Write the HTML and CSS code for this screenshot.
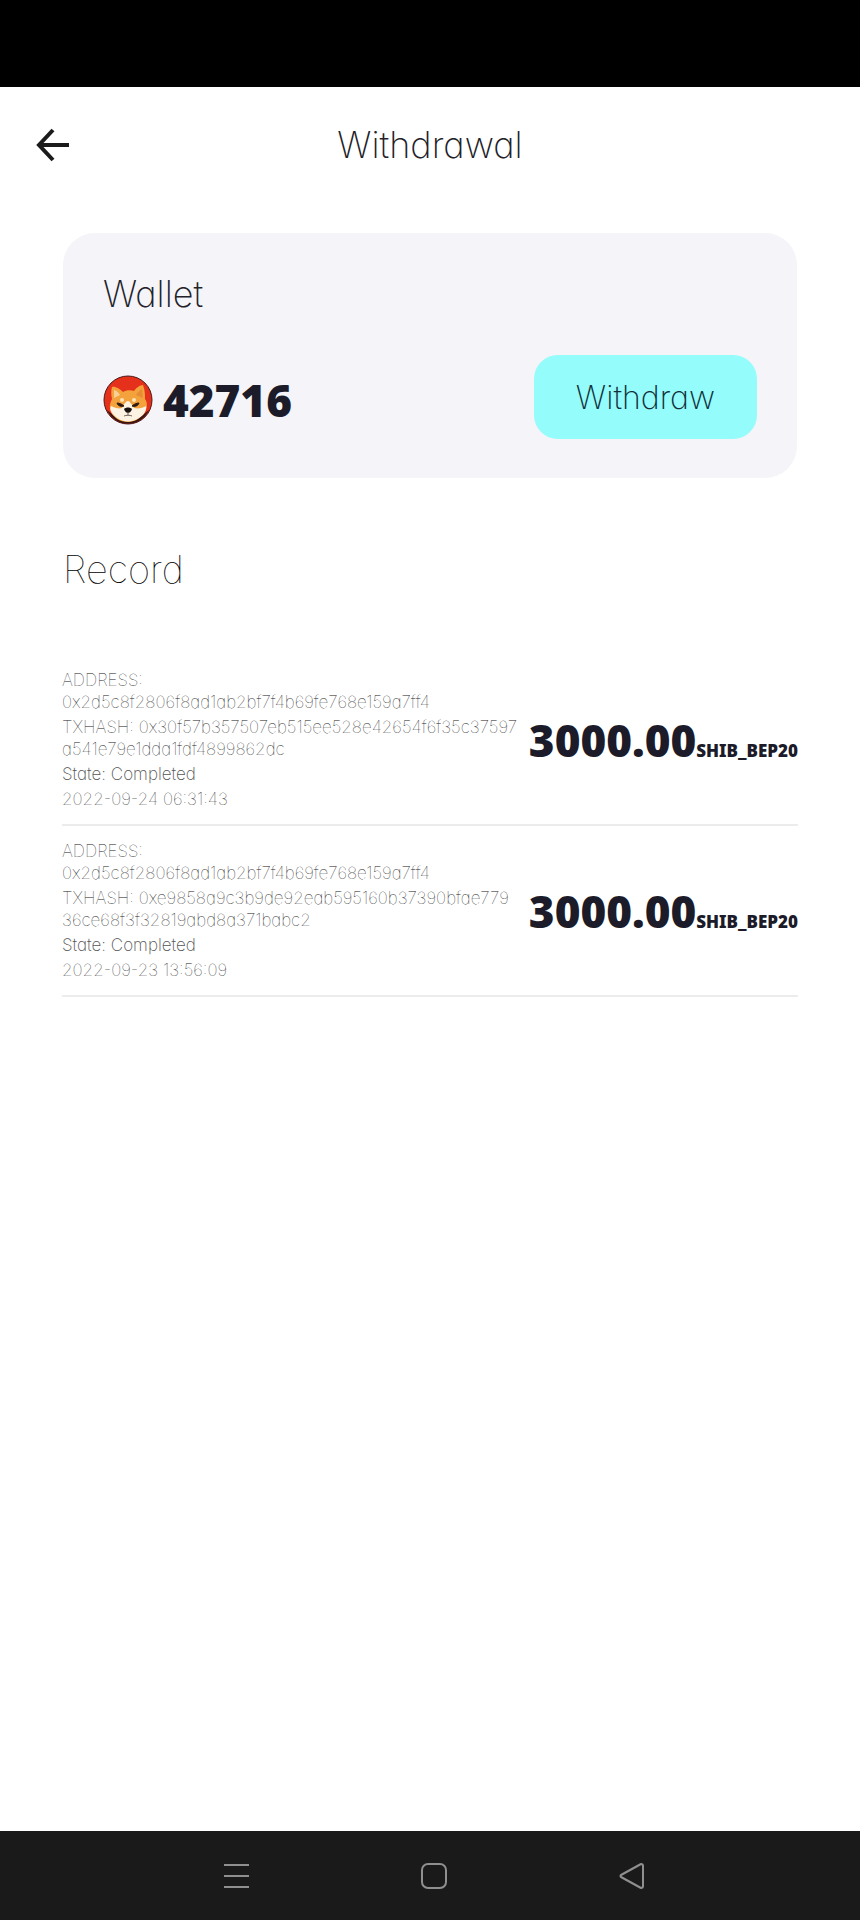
FILE: index.html
```html
<!DOCTYPE html>
<html lang="en">

<head>
    <meta charset="UTF-8">
    <meta name="viewport" content="width=device-width, initial-scale=1.0">
    <title>Withdrawal</title>
    <link rel="stylesheet" href="styles.css">
</head>

<body>
    <div class="status-bar"></div>

    <header class="header">
        <button class="back-btn" type="button" aria-label="Back">
            <svg width="34" height="34" viewBox="0 0 34 34" fill="none" stroke="#1b1b1b" stroke-width="4">
                <path d="M17 2 L3 17 L17 32 M3 17 H33" />
            </svg>
        </button>
        <h1 class="title">Withdrawal</h1>
    </header>

    <main class="main">
        <section class="wallet">
            <h2 class="wallet-title">Wallet</h2>
            <div class="wallet-row">
                <div class="balance">
                    <!-- shiba coin -->
                    <svg class="coin" width="50" height="50" viewBox="0 0 50 50">
                        <circle cx="25" cy="25" r="24" fill="#e5311b" stroke="#4a1a14" stroke-width="1" />
                        <path d="M4 35 A23 23 0 0 0 46 35 L40 40 L25 47 L10 40 Z" fill="#3a1411" />
                        <path d="M9 12 C12 11 17 14 20 17 C23 15 28 15 31 16 C33 13 37 10 40 10 C42 15 42 20 42 24 C45 28 44 33 42 37 C38 43 32 47 25 47 C17 47 11 43 8 37 C6 32 7 28 9 24 C8 20 8 15 9 12 Z" fill="#f3a23c" />
                        <path d="M11 15 C13 15 16 18 17 20 L11 23 Z" fill="#f9cf94" />
                        <path d="M39 14 C37 15 34 18 33 20 L40 23 Z" fill="#e58c35" />
                        <path d="M8 31 C12 33 16 34 19 33 C21 29 23 26 25 26 C27 26 28 29 31 33 C35 34 40 33 43 31 C44 35 41 40 36 43 C29 48 20 47 14 43 C9 39 6 35 8 31 Z" fill="#fdf3e3" />
                        <circle cx="19" cy="25" r="2" fill="#fbe3b9" />
                        <circle cx="31" cy="25" r="2" fill="#fbe3b9" />
                        <path d="M14 28 C16 28 19 29 21 31 C18 32 15 31 14 28 Z M36 28 C34 28 31 29 29 31 C32 32 35 31 36 28 Z" fill="#2a1a15" stroke="#2a1a15" />
                        <path d="M21 34 C23 32 27 32 29 34 C28 37 26 38 25 38 C24 38 22 37 21 34 Z" fill="#17110f" />
                        <path d="M25 37 V40 M21 41 C23 40 27 40 29 41" fill="none" stroke="#6e625c" stroke-width="1" />
                    </svg>
                    <span class="number">42716</span>
                </div>
                <button class="withdraw-btn" type="button">Withdraw</button>
            </div>
        </section>

        <h2 class="record-title">Record</h2>

        <ul class="record-list">
            <li class="record">
                <div class="info">
                    <p>ADDRESS:<br>0x2d5c8f2806f8ad1ab2bf7f4b69fe768e159a7ff4</p>
                    <p>TXHASH: 0x30f57b357507eb515ee528e42654f6f35c37597<br>a541e79e1dda1fdf4899862dc</p>
                    <p class="state">State: Completed</p>
                    <p>2022-09-24 06:31:43</p>
                </div>
                <div class="amount"><span class="number">3000.00</span><span class="unit">SHIB_BEP20</span></div>
            </li>
            <li class="record">
                <div class="info">
                    <p>ADDRESS:<br>0x2d5c8f2806f8ad1ab2bf7f4b69fe768e159a7ff4</p>
                    <p>TXHASH: 0xe9858a9c3b9de92eab595160b37390bfae779<br>36ce68f3f32819abd8a371babc2</p>
                    <p class="state">State: Completed</p>
                    <p>2022-09-23 13:56:09</p>
                </div>
                <div class="amount"><span class="number">3000.00</span><span class="unit">SHIB_BEP20</span></div>
            </li>
        </ul>
    </main>

    <nav class="nav-bar">
        <button type="button" aria-label="Recent apps">
            <svg width="28" height="28" viewBox="0 0 28 28" fill="none" stroke="#8f8f8f" stroke-width="2">
                <path d="M2 3 H27 M2 14 H27 M2 25 H27" />
            </svg>
        </button>
        <button type="button" aria-label="Home">
            <svg width="28" height="28" viewBox="0 0 28 28" fill="none" stroke="#8f8f8f" stroke-width="2">
                <rect x="2" y="2" width="24" height="24" rx="6" />
            </svg>
        </button>
        <button type="button" aria-label="Back">
            <svg width="28" height="28" viewBox="0 0 28 28" fill="none" stroke="#8f8f8f" stroke-width="2" stroke-linejoin="round">
                <path d="M3 13 L23 2 Q25 2 25 4 V24 Q25 26 23 26 L3 15 Q2 14 3 13 Z" />
            </svg>
        </button>
    </nav>
</body>

</html>
```
FILE: styles.css
```css
* {
    margin: 0;
    padding: 0;
    box-sizing: border-box;
}

body {
    display: flex;
    flex-direction: column;
    min-height: 100vh;
    background-color: #fff;
    color: #222228;
    font-family: Inter, "Liberation Sans", sans-serif;
    /* single-storey a */
    font-feature-settings: "cv11";
    font-weight: 200;
}

ul,
li {
    list-style: none;
}

button {
    border: none;
    background: none;
    color: inherit;
    font: inherit;
    font-feature-settings: inherit;
}

svg {
    display: block;
}

.status-bar {
    height: 87px;
    background-color: #000;
}

.header {
    display: grid;
    grid-template-columns: 1fr auto 1fr;
    align-items: center;
    height: 116px;
    padding: 0 36px;
}

.back-btn {
    justify-self: start;
}

.title,
.wallet-title {
    font-size: 36px;
    font-weight: 200;
    line-height: 44px;
}

.main {
    flex: 1;
    padding: 30px 62px 0;
}

.wallet {
    margin: 0 1px;
    padding: 39px 40px;
    border-radius: 32px;
    background-color: #f4f4f9;
}

.wallet-row {
    display: flex;
    justify-content: space-between;
    align-items: center;
    margin-top: 39px;
}

.balance {
    display: flex;
    align-items: center;
    gap: 10px;
    padding-top: 6px;
}

.number {
    color: #1c1b29;
    font-family: "Noto Sans", sans-serif;
    font-size: 44px;
    font-weight: 900;
    line-height: 50px;
}

.withdraw-btn {
    height: 84px;
    padding: 0 42px;
    border-radius: 24px;
    background-color: #94fcfa;
    color: #12303a;
    font-size: 32px;
}

.record-title {
    margin: 66px 0 61px 1px;
    color: #000;
    font-size: 38px;
    font-weight: 100;
    line-height: 50px;
}

.record {
    display: flex;
    align-items: center;
    justify-content: space-between;
    padding: 14px 0;
    border-bottom: 2px solid #ececec;
}

.info {
    display: flex;
    flex-direction: column;
    gap: 3px;
    color: #222;
    font-size: 17px;
    font-weight: 100;
    line-height: 22px;
}

.state {
    color: #555;
    font-weight: 200;
}

.amount {
    white-space: nowrap;
}

.unit {
    color: #1c1b29;
    font-family: "Noto Sans", sans-serif;
    font-size: 17px;
    font-weight: 900;
}

.nav-bar {
    display: flex;
    justify-content: center;
    gap: 170px;
    padding: 31px 0 30px 8px;
    background-color: #1a1a1a;
}
```
